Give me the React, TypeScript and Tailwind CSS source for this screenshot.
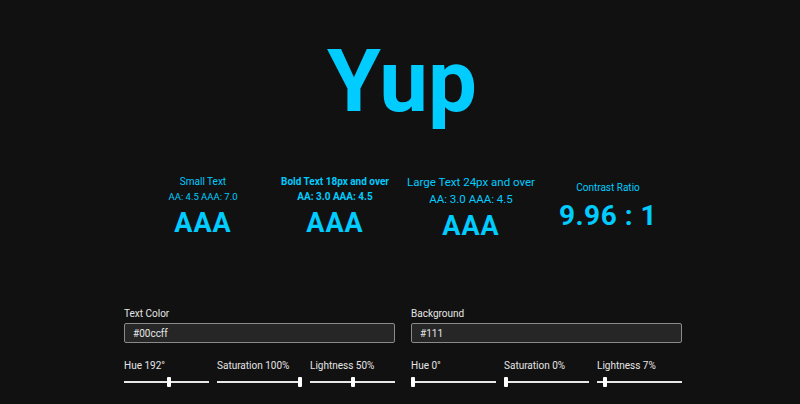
import React from 'react';

const font = { fontFamily: 'Roboto, "Noto Sans", "Liberation Sans", sans-serif' };

type SliderProps = { label: string; value: number; max: number };

const Slider = ({ label, value, max }: SliderProps) => {
  const pct = (value / max) * 100;
  return (
    <div className="flex flex-col">
      <span className="whitespace-nowrap text-[10px] leading-[14px] text-[#e5e5e5]">{label}</span>
      <div className="relative mt-[4px] h-[10px]">
        <div className="absolute left-0 right-0 top-[4px] h-[2px] bg-[#e8e8e8]" />
        <div
          className="absolute top-0 h-[10px] w-[4px] rounded-[1px] bg-white"
          style={{ left: `calc(${pct}% - ${(pct * 4) / 100}px)` }}
        />
      </div>
    </div>
  );
};

type PanelProps = {
  label: string;
  value: string;
  sliders: SliderProps[];
};

const Panel = ({ label, value, sliders }: PanelProps) => (
  <div className="flex flex-col">
    <span className="text-[10px] leading-[14px] text-[#e5e5e5]">{label}</span>
    <div className="mt-[2px] flex h-[20px] items-center rounded-[2px] border border-[#8a8a8a] bg-[#262626] px-[8px] text-[10px] text-[#e5e5e5]">
      {value}
    </div>
    <div className="mt-[16px] grid grid-cols-3 gap-[8px]">
      {sliders.map((s) => (
        <Slider key={s.label} {...s} />
      ))}
    </div>
  </div>
);

export default function App() {
  return (
    <div className="min-h-[404px] w-full bg-[#111] text-[#00ccff]" style={font}>
      {/* Title */}
      <div className="flex justify-center pt-[21px]">
        <h1 className="pl-[4px] text-[87px] font-bold leading-[120px]">Yup</h1>
      </div>

      {/* Scores */}
      <div className="mt-[33px] flex justify-center pl-[14px]">
        <div className="flex w-[130px] flex-col items-center whitespace-nowrap">
          <span className="text-[10px] leading-[15px]">Small Text</span>
          <span className="text-[9.5px] leading-[15px]">AA: 4.5 AAA: 7.0</span>
          <span className="mt-[3px] text-[27px] font-bold leading-[32px] tracking-[1px]">AAA</span>
        </div>
        <div className="flex w-[134px] flex-col items-center whitespace-nowrap">
          <span className="text-[10px] font-bold leading-[15px]">Bold Text 18px and over</span>
          <span className="text-[10px] font-bold leading-[15px]">AA: 3.0 AAA: 4.5</span>
          <span className="mt-[3px] text-[27px] font-bold leading-[32px] tracking-[1px]">AAA</span>
        </div>
        <div className="flex w-[138px] flex-col items-center whitespace-nowrap">
          <span className="text-[11.5px] leading-[17px]">Large Text 24px and over</span>
          <span className="text-[11.5px] leading-[17px]">AA: 3.0 AAA: 4.5</span>
          <span className="mt-[2px] text-[27px] font-bold leading-[32px] tracking-[1px]">AAA</span>
        </div>
        <div className="flex w-[136px] flex-col items-center whitespace-nowrap pt-[7px]">
          <span className="text-[10px] leading-[14px]">Contrast Ratio</span>
          <span className="mt-[4px] text-[28px] font-bold leading-[34px] tracking-[0.5px]">9.96 : 1</span>
        </div>
      </div>

      {/* Controls */}
      <div className="mx-auto mt-[65px] grid w-[558px] translate-x-[3px] grid-cols-2 gap-[16px] pb-[12px]">
        <Panel
          label="Text Color"
          value="#00ccff"
          sliders={[
            { label: 'Hue 192°', value: 192, max: 360 },
            { label: 'Saturation 100%', value: 100, max: 100 },
            { label: 'Lightness 50%', value: 50, max: 100 },
          ]}
        />
        <Panel
          label="Background"
          value="#111"
          sliders={[
            { label: 'Hue 0°', value: 0, max: 360 },
            { label: 'Saturation 0%', value: 0, max: 100 },
            { label: 'Lightness 7%', value: 7, max: 100 },
          ]}
        />
      </div>
    </div>
  );
}
